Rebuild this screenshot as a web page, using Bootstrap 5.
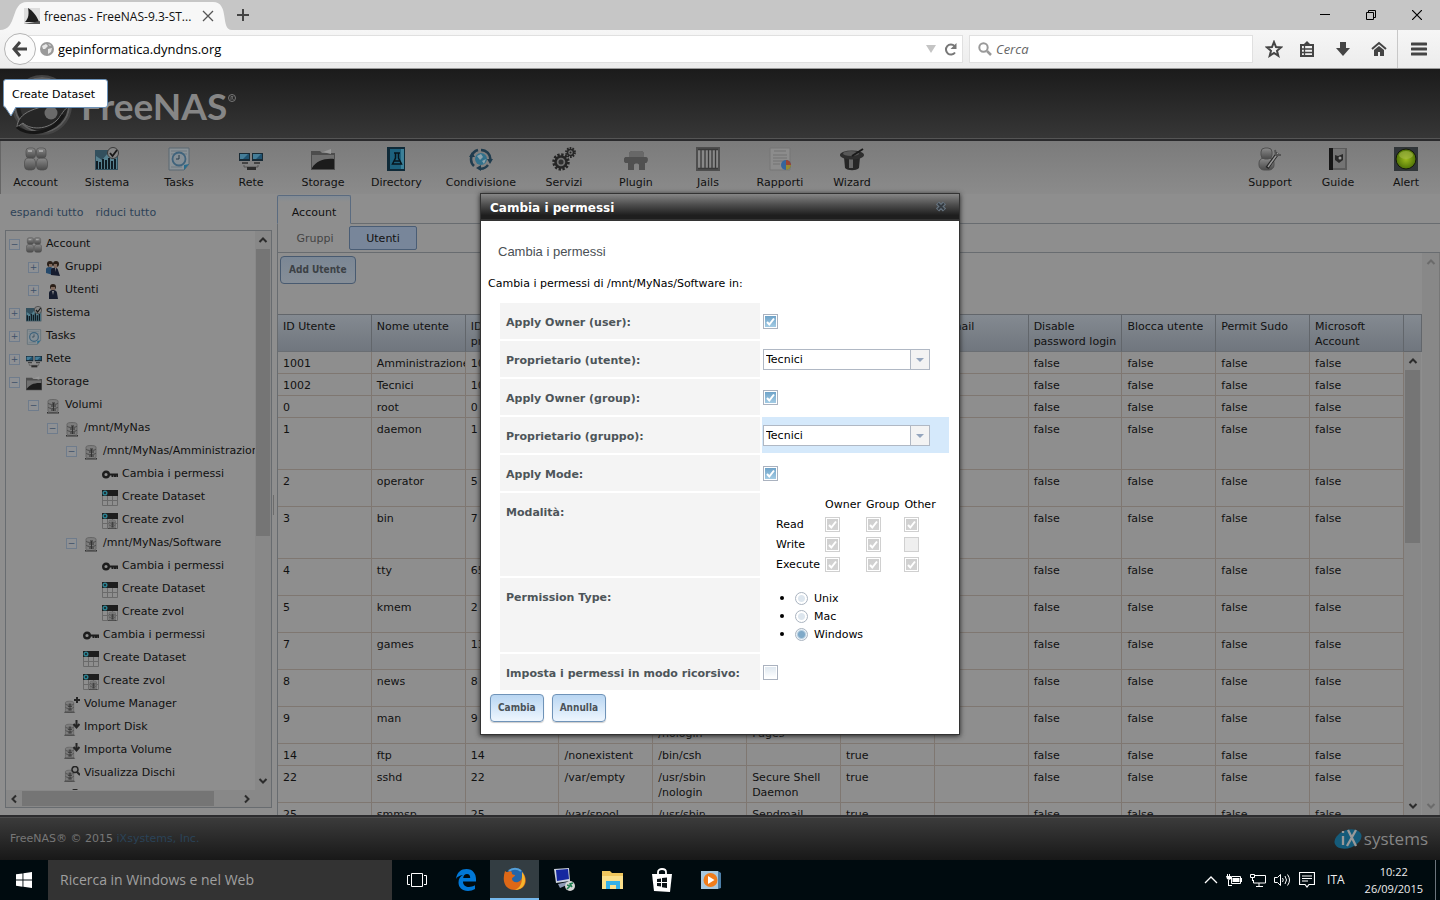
<!DOCTYPE html>
<html lang="it">
<head>
<meta charset="utf-8">
<meta name="viewport" content="width=device-width, initial-scale=1">
<title>freenas - FreeNAS-9.3-STABLE</title>
<link rel="stylesheet" href="https://cdn.jsdelivr.net/npm/bootstrap@5.3.0/dist/css/bootstrap.min.css">
<style>
:root{--dim:#8e8e8e;--line:#686c70}
body{font:11px/15px "DejaVu Sans",Verdana,sans-serif;color:#111;background:var(--dim);height:100vh;overflow:hidden}
a{text-decoration:none}
button{font:inherit;color:inherit}
svg{flex:none;display:block}
.ui{font-family:"Open Sans","Segoe UI",sans-serif}
/* browser chrome */
.tabstrip{height:30px;background:#c6c6c6}
.fftab{width:232px;height:30px;font-size:12px;padding:2px 18px 0 24px;color:#111}
.fftab .shape{position:absolute;left:0;top:2px;width:232px;height:28px}
.fftab>*{position:relative}
.winbtns button{width:46px}
.addr{height:39px;background:linear-gradient(#f6f6f6,#ececec);border-bottom:1px solid #9a9a9a;color:#4a4a4a}
.addr input{font-size:13px;color:#000;outline:0;min-width:0}
.urlbox{height:28px;border:1px solid #e0e0e0;border-left:0;margin-left:-8px}
.backbtn{width:32px;height:32px;border:1px solid #b4b4b4;border-radius:50%;background:#fafafa;z-index:1}
.searchbox{width:284px;height:28px;border:1px solid #e0e0e0;margin:0 6px}
.searchbox input{font-style:italic;font-size:13px}
.searchbox input::placeholder{color:#666;opacity:1}
.sep{width:1px;background:#c8c8c8}
.tool{width:36px;display:flex;justify-content:center;background:none;border:0;padding:0}
.tool.star{width:30px}
.tool.menu{width:42px}
/* application header */
.brandbar{height:72px;background:linear-gradient(#1b1b1b,#373737);border-bottom:2px solid #2a2a2c;box-shadow:inset 0 -1px #555;color:#868686}
.brandbar .word{font:700 37px/44px Lato,sans-serif;padding-top:4px}
.mainnav{height:53px;background:linear-gradient(#7b7b7b,#8b8b8b);box-shadow:inset 1px 0 #666}
.mainnav a{color:#111;min-width:72px;padding:6px 12px 0}
.mainnav>a:first-child{min-width:71px}
.mainnav .tools a{min-width:68px;padding:6px 4px 0}
.mainnav svg{width:24px;height:24px}
.mainnav span{margin-top:4px}
/* sidebar tree */
.side{width:273px;padding:11px 1px 7px 5px}
.side .links{padding-left:5px;margin-bottom:10px}
.side .links a{color:#2d4257}
.treebox{border:1px solid var(--line)}
.tree{list-style:none;margin:0;padding:1px 0 0}
.tree li{height:23px;padding-left:calc(3px + 19px*var(--lv,0));white-space:nowrap;display:flex;align-items:center}
.tree svg{width:16px;height:16px;margin:3px 4px 0 6px}
.tree .leaf svg{margin-left:17px}
.tree button{width:11px;height:11px;border:1px solid #6f7c8c;background:#8f9194;padding:0;color:#3c5068;font:9px/9px "DejaVu Sans",sans-serif;flex:none;margin-top:2px}
.l1{--lv:1}.l2{--lv:2}.l3{--lv:3}.l4{--lv:4}
.sbv{width:17px;background:#888;color:#2c2c2c;display:flex;flex-direction:column;align-items:center;justify-content:space-between;padding:4px 1px}
.sbv .thumb{background:#757575;width:100%}
.outer{width:18px;color:#6b6b6b;border-right:1px solid #777}
.sbh{height:17px;background:#888;color:#2c2c2c}
.sbh .thumb{background:#757575;width:192px;height:15px}
.splitter{width:4px}
.splitter i{width:1px;height:20px;background:#6c6c6c}
/* main pane */
.tabsrow{height:30px;padding-top:1px;border-bottom:1px solid var(--line)}
.apptab{width:74px;height:29px;border:1px solid #5a6b80;border-bottom-color:var(--dim);background:linear-gradient(#828b95,var(--dim) 6px);border-radius:2px 2px 0 0;margin-bottom:-1px;padding:6px 0 0}
.pane{border-left:1px solid var(--line)}
.subtabs{height:29px;border-bottom:1px solid var(--line);padding:2px 0 0 3px}
.subtabs button{height:24px;border:1px solid transparent;background:none;width:68px;color:#444}
.subtabs .on{background:#78869a;border-color:#4a5d75;border-radius:2px;color:#111}
.bigbtn{font:700 10px/14px "DejaVu Sans Condensed","DejaVu Sans",sans-serif;height:28px;border-radius:4px;padding:0 8px}
.add{background:linear-gradient(#7b8795,#868e97);border:1px solid #485a70;color:#3c4145}
.addrow{padding:3px 2px 30px}
.users{table-layout:fixed;width:100%;border-collapse:separate;border-spacing:0}
.users th,.users td{vertical-align:top;padding:4px 0 2px 5px;overflow:hidden}
.users th{font-weight:400;height:38px;background:linear-gradient(#848a91,#70767e);border-right:1px solid #62666b;border-bottom:1px solid #6a6e73;border-top:1px solid #62666b}
.users td{border-right:1px solid #7f7771;border-bottom:1px solid #7f7771}
.users .r2{height:37px}
.users .r3{height:52px}
.hfill{width:18px;height:38px;background:linear-gradient(#848a91,#70767e);border:solid #62666b;border-width:1px 1px 1px 0}
/* footer */
.foot{height:45px;background:linear-gradient(#3c3c3c,#181818);border-top:2px solid #2c2c2e;box-shadow:inset 0 1px #4d4d4d;color:#777;padding:0 12px 0 10px}
.foot a{color:#2a4358}
.foot .ix{color:#858585;font:17px/24px "Open Sans",sans-serif}
/* task bar */
.taskbar{height:40px;background:#000b0f;color:#eee;font-size:12px;line-height:16px}
.taskbar .ask{width:344px;background:#333;color:#fff;border:0;outline:0;font-size:14px;padding:0 12px}
.taskbar .ask::placeholder{color:#a0a0a0;opacity:1}
.taskbar .app{width:49px;background:none;border:0;padding:0;display:flex;align-items:center;justify-content:center}
.taskbar .startbtn{width:48px}
.taskbar .cur{background:#333d42;border-bottom:2px solid #76b9ed}
.taskbar .clock{font-size:11px;line-height:17px}
/* tooltip */
.tip{position:absolute;left:3px;top:79px;width:105px;background:#fff;border:1px solid #6d93b9;border-radius:3px;padding:7px 8px 5px;color:#000;z-index:5}
.tip svg{position:absolute;left:0;top:27px}
/* dialog */
.dlg{position:absolute;top:193px;left:0;right:0;margin:0 auto;width:480px;background:#fff;border:1px solid #333;box-shadow:0 1px 5px #222;z-index:4;color:#000}
.dlg .bar{height:27px;background:linear-gradient(#868686,#4b4b4b 45%,#1e1e1e 85%);border-bottom:2px solid #333;color:#fff;font:700 12px/16px "DejaVu Sans",sans-serif;padding:3px 12px 0 9px}
.dlg .intro{padding:23px 7px 0}
.dlg h2{font:13px/16px "Liberation Sans",Arial,sans-serif;color:#4a5055;margin:0 0 16px;padding-left:10px}
.fgrid{display:grid;grid-template-columns:260px 1fr;gap:2px;margin:12px 10px 0 19px}
.flabel{background:#f4f4f4;font-weight:700;color:#4d5559;padding:12px 0 9px 6px}
.field{padding:0 1px;min-height:36px}
.hot{background:#d5e9fb}
.cb{appearance:none;width:15px;height:15px;margin:0;border:1px solid #aab2bf;background:linear-gradient(#dfe8f0,#fff) content-box;padding:1px;display:block;flex:none}
.cb:checked{background:url("data:image/svg+xml,%3Csvg xmlns='http://www.w3.org/2000/svg' viewBox='0 0 11 11'%3E%3Cpath d='M2 6l2.3 2.5L9 2.5' fill='none' stroke='white' stroke-width='2'/%3E%3C/svg%3E") content-box center/11px no-repeat,linear-gradient(#6fa3c8,#a3cbe4) content-box}
.cb:disabled{border-color:#d0d0d0;background:#efefef}
.cb:disabled:checked{background:url("data:image/svg+xml,%3Csvg xmlns='http://www.w3.org/2000/svg' viewBox='0 0 11 11'%3E%3Cpath d='M2 6l2.3 2.5L9 2.5' fill='none' stroke='white' stroke-width='2'/%3E%3C/svg%3E") content-box center/11px no-repeat,linear-gradient(#cfcfcf,#d3d3d3) content-box}
.combo{appearance:none;width:167px;height:21px;border:1px solid #b0b8c4;border-radius:0;padding:1px 2px 0;font:inherit;color:#000;background:url("data:image/svg+xml,%3Csvg xmlns='http://www.w3.org/2000/svg' viewBox='0 0 19 19'%3E%3Cpath d='M0 0h19v19H0z' fill='%23f3f3f3'/%3E%3Cpath d='M.5 0v19' stroke='%23b0b8c4'/%3E%3Cpath d='M6 8h8l-4 4z' fill='%2394a5bd'/%3E%3C/svg%3E") right/19px no-repeat #fff}
.modes{border-collapse:separate;border-spacing:5px 2px;margin:0 0 1px 8px}
.modes th{font-weight:400;height:18px;padding:1px 0 0;text-align:left;vertical-align:middle}
.modes td{height:18px;padding:0}
.ptype{margin:11px 0 0;padding:0 0 9px 32px;line-height:17px}
.ptype li::marker{font-size:14px}
.ptype label{margin-left:6px}
.rb{appearance:none;width:13px;height:13px;border-radius:50%;border:1px solid #aab4c0;background:radial-gradient(#dde6ee 0 3px,#fff 4px);margin:0;vertical-align:-3px}
.rb:checked{background:radial-gradient(#7fa9c8 0 3px,#eaf2f8 5px)}
.actions{padding:4px 9px 12px}
.act{background:linear-gradient(#b9d6f2,#eef6fe);border:1px solid #6f93b8;color:#4a5258;box-shadow:0 1px 1px #ccc;padding:0 7px}
</style>
</head>
<body class="d-flex flex-column">
<svg width="0" height="0" class="position-absolute" aria-hidden="true">
<defs>
<linearGradient id="gg" x2="0" y2="1"><stop stop-color="#8b8b8b"/><stop offset="1" stop-color="#4a4a4a"/></linearGradient>
<radialGradient id="gl"><stop stop-color="#9dbb1e"/><stop offset="1" stop-color="#4f7306"/></radialGradient>
</defs>
<symbol id="account" viewBox="0 0 24 24"><g fill="url(#gg)" stroke="#4d4d4d" stroke-width=".7"><rect x="0.5" y="11" width="11" height="12" rx="4"/><rect x="12.500" y="11" width="11" height="12" rx="4"/><rect x="2" y="1" width="9.500" height="10" rx="3"/><rect x="12.500" y="1" width="9.500" height="10" rx="3"/></g><path d="M4 4h4M15 4h4" stroke="#a5a5a5" stroke-width="2"/></symbol>
<symbol id="system" viewBox="0 0 24 24"><path d="M0 3h23v20H0z" fill="#33505e"/><path d="M1 9l6 4 6-7 4 6 5-3v13H1z" fill="#55808f"/><path d="M2 22V14M5 22v-7M8 22V12M11 22v-9M14 22V11M17 22v-8M20 22V12" stroke="#101c24" stroke-width="2"/><circle cx="18" cy="6" r="5.500" fill="#858585" stroke="#3b3b3b"/><path d="M15 6l2.500 3L22 3" fill="none" stroke="#181818" stroke-width="1.800"/></symbol>
<symbol id="tasks" viewBox="0 0 24 24"><path d="M2 1h20v16l-5 6H2z" fill="#8a9297" stroke="#5b6972"/><path d="M4 4h16M4 7h16M4 20h11" stroke="#6c7880"/><circle cx="12" cy="12" r="6.500" fill="#858f96" stroke="#3f637c" stroke-width="1.800"/><path d="M12 8v4H9" fill="none" stroke="#263a48"/><path d="M22 17l-5 6v-5z" fill="#276c8d"/></symbol>
<symbol id="net" viewBox="0 0 24 24"><path d="M0 6h11v8H0zM13 6h11v8H13z" fill="#182a35"/><path d="M1 7h9v5H1zM14 7h9v5h-9z" fill="#1f5270"/><path d="M1 7h8l-5 5H1zM14 7h8l-5 5h-3z" fill="#457d98"/><path d="M3 16h6M15 16h6" stroke="#444" stroke-width="2"/><path d="M5 18v2h14v-2" stroke="#555" fill="none"/><path d="M8 20h9v3H8z" fill="#2c2c2c"/></symbol>
<symbol id="storage" viewBox="0 0 24 24"><path d="M0 4h9l2 2h13v17H0z" fill="#4d4d4d"/><path d="M12 5l8-3v5" fill="#999"/><path d="M1 8h22v14H1z" fill="#1c1c1c"/><path d="M1 8h22v4C14 11 5 14 1 21z" fill="#6f6f6f"/></symbol>
<symbol id="dir" viewBox="0 0 24 24"><path d="M3 0h18v24H3z" fill="#0f2a38"/><path d="M6 2h14v20H6z" fill="#1d617d"/><path d="M17 2h3v20h-3z" fill="#3c8098"/><path d="M10 6h6M11.500 6v5L8.500 17h9l-3-6V6M10 14h6" fill="none" stroke="#07151d" stroke-width="1.500"/></symbol>
<symbol id="share" viewBox="0 0 24 24"><path d="M12 3A9.500 9.500 0 0 1 21.500 13M19 18A9.500 9.500 0 0 1 10 21.500M5 19A9.500 9.500 0 0 1 9 3" fill="none" stroke="#203c4e" stroke-width="2.500"/><path d="M18 12h6l-3 5zM12 18v6l-5-3zM0 10h6L3 5z" fill="#203c4e"/><circle cx="12" cy="12" r="6" fill="#31718c"/><path d="M8 9l4-2 2 3-3 3zM13 14l4-2-2 5z" fill="#8ba2ac"/></symbol>
<symbol id="gear" viewBox="0 0 24 24"><circle cx="9" cy="15" r="7" fill="none" stroke="#252525" stroke-width="3.500" stroke-dasharray="2.200 1.464"/><circle cx="9" cy="15" r="5.500" fill="#707070" stroke="#252525" stroke-width="2.500"/><circle cx="9" cy="15" r="2.500" fill="#303030"/><circle cx="18.500" cy="5.500" r="4.200" fill="none" stroke="#252525" stroke-width="2.400" stroke-dasharray="1.600 1.040"/><circle cx="18.500" cy="5.500" r="3" fill="#777" stroke="#252525" stroke-width="1.500"/><circle cx="18.500" cy="5.500" r="1" fill="#222"/></symbol>
<symbol id="plugin" viewBox="0 0 24 24"><path d="M5 10V7c0-2 2-3 3-3h9c2 0 3 2 3 3v3h2c3 0 2 6 0 6h-1v7h-6v-5c0-2-5-2-5 0v5H4v-7H2c-3 0-3-6 0-6z" fill="#505050"/><path d="M5 10V7c0-2 2-3 3-3h9c2 0 3 2 3 3v3z" fill="#686868"/></symbol>
<symbol id="jail" viewBox="0 0 24 24"><path d="M0 0h24v24H0z" fill="#4e4e4e"/><path d="M2 2h20v20H2z" fill="#888"/><path d="M5 3v18M9 3v18M12.500 3v18M16 3v18M19.500 3v18M2 2.500h20M2 21.500h20" stroke="#3a3a3a" stroke-width="1.300"/></symbol>
<symbol id="report" viewBox="0 0 24 24"><path d="M2 1h20v22H2z" fill="#8c8c8c" stroke="#777"/><path d="M6 4h12M5 8h14M5 11h14M5 14h14M5 17h7" stroke="#737373"/><circle cx="18" cy="18" r="5" fill="#35659b"/><path d="M18 18V13a5 5 0 0 1 5 5z" fill="#9b4432"/><path d="M18 18h5a5 5 0 0 1-5 5z" fill="#98892f"/></symbol>
<symbol id="wizard" viewBox="0 0 24 24"><path d="M4 10h16l-1 11c-3 3-11 3-14 0z" fill="#262626"/><path d="M9 12h4v9H9z" fill="#666"/><ellipse cx="12" cy="8" rx="12" ry="4.500" fill="#2e2e2e"/><ellipse cx="11" cy="6.500" rx="8" ry="2.500" fill="#585858"/><path d="M12 9L23 2" stroke="#1a1a1a" stroke-width="2"/></symbol>
<symbol id="support" viewBox="0 0 24 24"><g fill="url(#gg)" stroke="#505050"><rect x="1" y="11" width="15" height="12" rx="5"/><rect x="3" y="1" width="11" height="11" rx="4"/></g><path d="M9 21L20 6" stroke="#252525" stroke-width="3.500"/><path d="M10 20L20 6" stroke="#999" stroke-width="1.500"/><path d="M17 3l1 5 5 0" fill="none" stroke="#555" stroke-width="2"/></symbol>
<symbol id="guide" viewBox="0 0 24 24"><path d="M3 1h18v22H3z" fill="#5c5c5c"/><path d="M3 1h4v22H3z" fill="#161616"/><path d="M7 2h12v19H7z" fill="#747474"/><path d="M9 8l3 1 5-2v6l-4 3-4-3z" fill="#2a2a2a"/><circle cx="14" cy="11" r="1.500" fill="#999"/></symbol>
<symbol id="alert" viewBox="0 0 24 24"><path d="M0 0h24v24H0z" fill="#303538"/><circle cx="12" cy="12" r="10" fill="url(#gl)" stroke="#15180c"/><ellipse cx="12" cy="8" rx="7" ry="4" fill="#a4b947" opacity=".6"/></symbol>
<symbol id="user" viewBox="0 0 16 16"><circle cx="8" cy="4" r="3" fill="#2a1f18"/><path d="M6 4h4v4H6z" fill="#80695c"/><path d="M4 16V10c0-2 2-3 4-3s4 1 4 3l1 6z" fill="#161c2e"/><path d="M7 8h2l-1 4z" fill="#8b8b8b"/></symbol>
<symbol id="group" viewBox="0 0 16 16"><circle cx="5" cy="4" r="3" fill="#2a1f18"/><circle cx="11" cy="4" r="3" fill="#2a1f18"/><path d="M4 4h3v3H4zM9 4h3v4H9z" fill="#80695c"/><path d="M1 13V9c0-2 6-3 7 0v6z" fill="#25496b"/><path d="M6 15V10c0-3 7-3 7 0l2 6z" fill="#161c2e"/><path d="M10 8h1l-1 4z" fill="#8b8b8b"/></symbol>
<symbol id="vol" viewBox="0 0 16 16"><path d="M3 3c0-2 10-2 10 0v10c0 2-10 2-10 0z" fill="#7d7d7d" stroke="#666"/><path d="M3 5c1 2 9 2 10 0M3 9c1 2 9 2 10 0" fill="none" stroke="#4a4a4a"/><path d="M7 5h3M6 8h5M6 12h5M8.500 5v8M3 14l-1 1h12l-1-1" stroke="#333" fill="none"/></symbol>
<symbol id="volplus" viewBox="0 0 16 16"><use href="#vol" transform="translate(-1 3) scale(.82)"/><path d="M13 0v6M10 3h6" stroke="#252525" stroke-width="2"/></symbol>
<symbol id="voldown" viewBox="0 0 16 16"><use href="#vol" transform="translate(-1 3) scale(.82)"/><path d="M12.500 0v7M9.500 4l3 3.500 3-3.500" fill="none" stroke="#252525" stroke-width="2"/></symbol>
<symbol id="volfind" viewBox="0 0 16 16"><use href="#vol" transform="translate(-1 3) scale(.82)"/><circle cx="11" cy="3.500" r="3" fill="#888" stroke="#252525" stroke-width="1.500"/><path d="M13 6l3 3" stroke="#252525" stroke-width="2"/></symbol>
<symbol id="key" viewBox="0 0 16 16"><circle cx="4" cy="7.500" r="2.800" fill="none" stroke="#1d1d1d" stroke-width="2.400"/><path d="M7 7.500h9M10.500 8v2M13 8v2M15.300 8v2" stroke="#1d1d1d" stroke-width="2"/></symbol>
<symbol id="dset" viewBox="0 0 16 16"><path d="M.5 6v9.500h15V6M5.500 6v10M10.500 6v10M0 10.500h16" fill="none" stroke="#6a6a6a"/><path d="M0 0h16v6H0z" fill="#1d1d1d"/><circle cx="3" cy="3" r="1.800" fill="none" stroke="#2c8090" stroke-width="1.500"/></symbol>
<symbol id="zvol" viewBox="0 0 16 16"><use href="#dset"/><use href="#vol" transform="translate(5 6) scale(.65)"/></symbol>
<symbol id="up" viewBox="0 0 10 10"><path d="M1.500 7L5 3.500 8.500 7" fill="none" stroke="currentColor" stroke-width="2"/></symbol>
<symbol id="dn" viewBox="0 0 10 10"><path d="M1.500 3L5 6.500 8.500 3" fill="none" stroke="currentColor" stroke-width="2"/></symbol>
</svg>

<header class="ui">
<div class="tabstrip d-flex">
 <div class="fftab position-relative d-flex align-items-center">
  <svg class="shape" viewBox="0 0 232 28"><path d="M0 28C18 28 10 0 27 0H213C230 0 220 28 232 28z" fill="#f7f7f7"/></svg>
  <svg width="16" height="16" viewBox="0 0 16 16"><path d="M0 0h16v16H0z" fill="#ddd"/><path d="M4 0c5 3 9 8 11 14H1C5 10 5 5 4 0z" fill="#1d1d1d"/><path d="M0 16l16-3v3z" fill="#555"/></svg>
  <span class="ms-1 flex-grow-1 text-nowrap">freenas - FreeNAS-9.3-ST...</span>
  <svg width="12" height="12" viewBox="0 0 12 12"><path d="M1 1l10 10M11 1L1 11" stroke="#555" stroke-width="1.300"/></svg>
 </div>
 <button class="btn p-0 border-0 ms-1" aria-label="Nuova scheda"><svg width="14" height="14" viewBox="0 0 14 14"><path d="M7 1v12M1 7h12" stroke="#444" stroke-width="2"/></svg></button>
 <div class="winbtns ms-auto d-flex">
  <button class="btn p-0 border-0 rounded-0" aria-label="Riduci"><svg class="m-auto" width="10" height="10"><path d="M0 4.500h10" stroke="#000"/></svg></button>
  <button class="btn p-0 border-0 rounded-0" aria-label="Ripristina"><svg class="m-auto" width="10" height="10"><path d="M.5 2.500h7v7h-7zM2.500 2V.5h7v7H8" fill="none" stroke="#000"/></svg></button>
  <button class="btn p-0 border-0 rounded-0" aria-label="Chiudi"><svg class="m-auto" width="10" height="10"><path d="M0 0l10 10M10 0L0 10" stroke="#000" stroke-width="1.200"/></svg></button>
 </div>
</div>
<div class="addr d-flex align-items-center ps-1">
 <button class="backbtn p-0 d-flex align-items-center justify-content-center" aria-label="Indietro"><svg width="16" height="16" viewBox="0 0 16 16"><path d="M8 1L2 8l6 7M2 8h13" fill="none" stroke="#444" stroke-width="3"/></svg></button>
 <div class="urlbox bg-white flex-grow-1 d-flex align-items-center ps-2 pe-1">
  <svg class="ms-1 me-1" width="14" height="14" viewBox="0 0 14 14"><circle cx="7" cy="7" r="7" fill="#9a9a9a"/><path d="M2 4l4-2 2 2-3 3-2 0zM8 7l4-1-1 4-3 2zM8 2l3 1-1 1z" fill="#e8e8e8"/></svg>
  <input class="border-0 p-0 flex-grow-1" aria-label="Indirizzo" value="gepinformatica.dyndns.org">
  <svg class="me-2" width="10" height="8"><path d="M0 0h10L5 8z" fill="#c4c4c4"/></svg>
  <svg width="14" height="14" viewBox="0 0 14 14"><path d="M11 10.500A5 5 0 1 1 10.500 4" fill="none" stroke="#777" stroke-width="2"/><path d="M12.500 1v6h-6z" fill="#777"/></svg>
 </div>
 <div class="searchbox bg-white d-flex align-items-center ps-2 pe-1">
  <svg width="14" height="14" viewBox="0 0 14 14"><circle cx="5.500" cy="5.500" r="4.200" fill="none" stroke="#999" stroke-width="2"/><path d="M9 9l4 4" stroke="#999" stroke-width="2.500"/></svg>
  <input class="border-0 p-0 ps-1 w-100" placeholder="Cerca" aria-label="Cerca">
 </div>
 <button class="tool star" aria-label="Segnalibri"><svg width="18" height="18" viewBox="0 0 18 18"><path d="M9 2l2 5 5 .4-4 3.400 1.300 5L9 13l-4.300 2.800L6 10.800 2 7.400 7 7z" fill="none" stroke="#444" stroke-width="2"/></svg></button>
 <button class="tool" aria-label="Elenco"><svg width="14" height="16" viewBox="0 0 14 16"><path d="M1 4h12v11H1z" fill="none" stroke="#444" stroke-width="2"/><path d="M4 3l3-3 3 3z" fill="#444"/><path d="M2 8h10M2 11.500h10M4.500 5v9" stroke="#444" stroke-width="1.300"/></svg></button>
 <button class="tool" aria-label="Download"><svg width="14" height="16" viewBox="0 0 14 16"><path d="M4 1h6v6h4l-7 8-7-8h4z" fill="#444"/></svg></button>
 <button class="tool" aria-label="Pagina iniziale"><svg width="16" height="16" viewBox="0 0 16 16"><path d="M1 8l7-6 7 6" fill="none" stroke="#444" stroke-width="2"/><path d="M3 9l5-4 5 4v6h-4v-4H7v4H3z" fill="#444"/></svg></button>
 <div class="sep align-self-stretch"></div>
 <button class="tool menu" aria-label="Menu"><svg width="16" height="14"><path d="M1 2h14M1 7h14M1 12h14" stroke="#444" stroke-width="3" stroke-linecap="round"/></svg></button>
</div>
</header>

<div class="brandbar d-flex align-items-center flex-shrink-0">
 <svg width="81" height="70" viewBox="0 0 81 70"><circle cx="42" cy="36" r="29" fill="none" stroke="#444" stroke-width="2"/><circle cx="42" cy="36" r="27" fill="#202020" stroke="#5e5e5e" stroke-width="2"/><circle cx="42" cy="36" r="22" fill="#333"/><path d="M17 58C18 44 34 36 74 34c-6 4-8 4-13 12-9 15-30 16-38 8z" fill="#262626" stroke="#777"/><path d="M17 58c8 8 34 10 46-12" stroke="#161616" fill="none" stroke-width="3"/><circle cx="51" cy="44" r="6.500" fill="#6a6a6a"/></svg>
 <span class="word">FreeNAS</span><svg class="align-self-start mt-4" width="10" height="10"><circle cx="5" cy="5" r="3.500" fill="none" stroke="#777"/><path d="M4 7V3.500h2L5 5l1.500 2" fill="none" stroke="#777" stroke-width=".8"/></svg>
</div>

<nav class="mainnav d-flex text-center flex-shrink-0">
 <a href="#" class="d-flex flex-column align-items-center"><svg><use href="#account"/></svg><span>Account</span></a>
 <a href="#" class="d-flex flex-column align-items-center"><svg><use href="#system"/></svg><span>Sistema</span></a>
 <a href="#" class="d-flex flex-column align-items-center"><svg><use href="#tasks"/></svg><span>Tasks</span></a>
 <a href="#" class="d-flex flex-column align-items-center"><svg><use href="#net"/></svg><span>Rete</span></a>
 <a href="#" class="d-flex flex-column align-items-center"><svg><use href="#storage"/></svg><span>Storage</span></a>
 <a href="#" class="d-flex flex-column align-items-center"><svg><use href="#dir"/></svg><span>Directory</span></a>
 <a href="#" class="d-flex flex-column align-items-center"><svg><use href="#share"/></svg><span>Condivisione</span></a>
 <a href="#" class="d-flex flex-column align-items-center"><svg><use href="#gear"/></svg><span>Servizi</span></a>
 <a href="#" class="d-flex flex-column align-items-center"><svg><use href="#plugin"/></svg><span>Plugin</span></a>
 <a href="#" class="d-flex flex-column align-items-center"><svg><use href="#jail"/></svg><span>Jails</span></a>
 <a href="#" class="d-flex flex-column align-items-center"><svg><use href="#report"/></svg><span>Rapporti</span></a>
 <a href="#" class="d-flex flex-column align-items-center"><svg><use href="#wizard"/></svg><span>Wizard</span></a>
 <div class="tools d-flex ms-auto">
 <a href="#" class="d-flex flex-column align-items-center"><svg><use href="#support"/></svg><span>Support</span></a>
 <a href="#" class="d-flex flex-column align-items-center"><svg><use href="#guide"/></svg><span>Guide</span></a>
 <a href="#" class="d-flex flex-column align-items-center"><svg><use href="#alert"/></svg><span>Alert</span></a>
 </div>
</nav>

<main class="d-flex flex-grow-1 overflow-hidden">
<aside class="side d-flex flex-column flex-shrink-0">
 <div class="links d-flex gap-2"><a href="#" class="me-1">espandi tutto</a><a href="#">riduci tutto</a></div>
 <div class="treebox flex-grow-1 overflow-hidden d-flex flex-column">
  <div class="d-flex flex-grow-1 overflow-hidden">
  <ul class="tree flex-grow-1 overflow-hidden">
   <li><button>−</button><svg><use href="#account"/></svg>Account</li>
   <li class="l1"><button>+</button><svg><use href="#group"/></svg>Gruppi</li>
   <li class="l1"><button>+</button><svg><use href="#user"/></svg>Utenti</li>
   <li><button>+</button><svg><use href="#system"/></svg>Sistema</li>
   <li><button>+</button><svg><use href="#tasks"/></svg>Tasks</li>
   <li><button>+</button><svg><use href="#net"/></svg>Rete</li>
   <li><button>−</button><svg><use href="#storage"/></svg>Storage</li>
   <li class="l1"><button>−</button><svg><use href="#vol"/></svg>Volumi</li>
   <li class="l2"><button>−</button><svg><use href="#vol"/></svg>/mnt/MyNas</li>
   <li class="l3"><button>−</button><svg><use href="#vol"/></svg>/mnt/MyNas/Amministrazione</li>
   <li class="l4 leaf"><svg><use href="#key"/></svg>Cambia i permessi</li>
   <li class="l4 leaf"><svg><use href="#dset"/></svg>Create Dataset</li>
   <li class="l4 leaf"><svg><use href="#zvol"/></svg>Create zvol</li>
   <li class="l3"><button>−</button><svg><use href="#vol"/></svg>/mnt/MyNas/Software</li>
   <li class="l4 leaf"><svg><use href="#key"/></svg>Cambia i permessi</li>
   <li class="l4 leaf"><svg><use href="#dset"/></svg>Create Dataset</li>
   <li class="l4 leaf"><svg><use href="#zvol"/></svg>Create zvol</li>
   <li class="l3 leaf"><svg><use href="#key"/></svg>Cambia i permessi</li>
   <li class="l3 leaf"><svg><use href="#dset"/></svg>Create Dataset</li>
   <li class="l3 leaf"><svg><use href="#zvol"/></svg>Create zvol</li>
   <li class="l2 leaf"><svg><use href="#volplus"/></svg>Volume Manager</li>
   <li class="l2 leaf"><svg><use href="#voldown"/></svg>Import Disk</li>
   <li class="l2 leaf"><svg><use href="#voldown"/></svg>Importa Volume</li>
   <li class="l2 leaf"><svg><use href="#volfind"/></svg>Visualizza Dischi</li>
   <li class="l2 leaf"><svg><use href="#volfind"/></svg>Visualizza Multipaths</li>
  </ul>
  <div class="sbv"><svg width="10" height="10"><use href="#up"/></svg><div class="thumb mb-auto mt-1" style="height:52%"></div><svg width="10" height="10"><use href="#dn"/></svg></div>
  </div>
  <div class="sbh d-flex align-items-center ps-1 pe-3 flex-shrink-0"><svg width="8" height="10" viewBox="0 0 8 10"><path d="M6 1.500L2.500 5 6 8.500" fill="none" stroke="currentColor" stroke-width="2"/></svg><div class="thumb ms-1 me-auto"></div><svg class="me-1" width="8" height="10" viewBox="0 0 8 10"><path d="M2 1.500L5.500 5 2 8.500" fill="none" stroke="currentColor" stroke-width="2"/></svg></div>
 </div>
</aside>
<div class="splitter d-flex align-items-center flex-shrink-0"><i></i></div>
<section class="flex-grow-1 d-flex flex-column overflow-hidden">
 <div class="tabsrow d-flex flex-shrink-0"><button class="apptab">Account</button></div>
 <div class="pane flex-grow-1 d-flex flex-column overflow-hidden">
  <div class="subtabs d-flex flex-shrink-0"><button>Gruppi</button><button class="on">Utenti</button></div>
  <div class="d-flex flex-grow-1 overflow-hidden">
   <div class="flex-grow-1 d-flex flex-column overflow-hidden">
    <div class="addrow"><button class="bigbtn add">Add Utente</button></div>
    <div class="d-flex flex-grow-1 overflow-hidden">
     <div class="flex-grow-1 overflow-hidden">
     <table class="users">
     <thead><tr><th>ID Utente</th><th>Nome utente</th><th>ID gruppo primario</th><th></th><th></th><th></th><th></th><th>E-mail</th><th>Disable password login</th><th>Blocca utente</th><th>Permit Sudo</th><th>Microsoft Account</th></tr></thead>
     <tbody>
     <tr><td>1001</td><td>Amministrazione</td><td>1001</td><td></td><td></td><td></td><td></td><td></td><td>false</td><td>false</td><td>false</td><td>false</td></tr>
     <tr><td>1002</td><td>Tecnici</td><td>1002</td><td></td><td></td><td></td><td></td><td></td><td>false</td><td>false</td><td>false</td><td>false</td></tr>
     <tr><td>0</td><td>root</td><td>0</td><td></td><td></td><td></td><td></td><td></td><td>false</td><td>false</td><td>false</td><td>false</td></tr>
     <tr class="r3"><td>1</td><td>daemon</td><td>1</td><td></td><td></td><td></td><td></td><td></td><td>false</td><td>false</td><td>false</td><td>false</td></tr>
     <tr class="r2"><td>2</td><td>operator</td><td>5</td><td></td><td></td><td></td><td></td><td></td><td>false</td><td>false</td><td>false</td><td>false</td></tr>
     <tr class="r3"><td>3</td><td>bin</td><td>7</td><td></td><td></td><td></td><td></td><td></td><td>false</td><td>false</td><td>false</td><td>false</td></tr>
     <tr class="r2"><td>4</td><td>tty</td><td>65533</td><td></td><td></td><td></td><td></td><td></td><td>false</td><td>false</td><td>false</td><td>false</td></tr>
     <tr class="r2"><td>5</td><td>kmem</td><td>2</td><td></td><td></td><td></td><td></td><td></td><td>false</td><td>false</td><td>false</td><td>false</td></tr>
     <tr class="r2"><td>7</td><td>games</td><td>13</td><td></td><td></td><td></td><td></td><td></td><td>false</td><td>false</td><td>false</td><td>false</td></tr>
     <tr class="r2"><td>8</td><td>news</td><td>8</td><td></td><td></td><td></td><td></td><td></td><td>false</td><td>false</td><td>false</td><td>false</td></tr>
     <tr class="r2"><td>9</td><td>man</td><td>9</td><td></td><td><br>/nologin</td><td><br>Pages</td><td></td><td></td><td>false</td><td>false</td><td>false</td><td>false</td></tr>
     <tr><td>14</td><td>ftp</td><td>14</td><td>/nonexistent</td><td>/bin/csh</td><td></td><td>true</td><td></td><td>false</td><td>false</td><td>false</td><td>false</td></tr>
     <tr><td>22</td><td>sshd</td><td>22</td><td>/var/empty</td><td>/usr/sbin<br>/nologin</td><td>Secure Shell<br>Daemon</td><td>true</td><td></td><td>false</td><td>false</td><td>false</td><td>false</td></tr>
     <tr class="r2"><td>25</td><td>smmsp</td><td>25</td><td>/var/spool</td><td>/usr/sbin</td><td>Sendmail</td><td>true</td><td></td><td>false</td><td>false</td><td>false</td><td>false</td></tr>
     </tbody></table>
     </div>
     <div class="d-flex flex-column flex-shrink-0">
      <div class="hfill"></div>
      <div class="sbv flex-grow-1"><svg width="10" height="10"><use href="#up"/></svg><div class="thumb mb-auto mt-1" style="height:38%"></div><svg width="10" height="10"><use href="#dn"/></svg></div>
     </div>
    </div>
   </div>
   <div class="sbv outer flex-shrink-0"><svg width="10" height="10"><use href="#up"/></svg><svg width="10" height="10"><use href="#dn"/></svg></div>
  </div>
 </div>
</section>
</main>

<footer class="foot d-flex align-items-center flex-shrink-0">
 <span>FreeNAS® © 2015 <a href="#">iXsystems, Inc.</a></span>
 <div class="ix ms-auto d-flex align-items-center"><svg width="30" height="24" viewBox="0 0 30 24"><ellipse cx="14" cy="12" rx="14" ry="9" transform="rotate(-20 14 12)" fill="#155b7a"/><path d="M9 9v9M9 4v2M14 3l8 16M22 3l-9 16" stroke="#999" stroke-width="2.300" fill="none"/></svg>systems</div>
</footer>

<div class="taskbar ui d-flex flex-shrink-0">
 <button class="app startbtn" aria-label="Start"><svg width="16" height="16" viewBox="0 0 16 16"><path d="M0 2.300L6.500 1.400V7.600H0zM7.400 1.300L16 0v7.600H7.400zM0 8.500h6.500v6.200L0 13.800zM7.400 8.500H16V16l-8.600-1.200z" fill="#fff"/></svg></button>
 <input class="ask" placeholder="Ricerca in Windows e nel Web" aria-label="Ricerca">
 <button class="app" aria-label="Visualizzazione attività"><svg width="20" height="14"><path d="M4.500.5h11v13h-11zM3 2.500H.5v9H3M17 2.500h2.500v9H17" fill="none" stroke="#fff"/></svg></button>
 <button class="app" aria-label="Edge"><svg width="20" height="22" viewBox="0 0 20 22"><path d="M0 10C1 3 5 0 10.500 0 17 0 20 5 20 10v2.500H7c0 4 3 5.500 6 5.500 2 0 4-.6 6-1.700V20c-2 1.300-4.500 2-7 2-6 0-9.500-3.600-9.500-8.500C2.500 10 4 7.600 7 6 3.500 6.500 1 8 0 10zM7.200 9h7c0-2.500-1-4-3.200-4S7.500 6.600 7.200 9z" fill="#0078d7"/></svg></button>
 <button class="app cur" aria-label="Firefox"><svg width="24" height="24" viewBox="0 0 24 24"><circle cx="12" cy="11" r="10" fill="#2465a8"/><path d="M6 4c3-3 9-3 12 0" stroke="#55a0d8" stroke-width="2" fill="none"/><path d="M2 4c1 1 2 1 3 1 1-1 3-1 4 0-1 2 1 3 3 3 0 2-3 2-3 4s3 4 6 3 4-3 4-6c1 0 0-3 0-4 7 7 4 18-7 18C1 23-1 13 2 4z" fill="#de6817"/><path d="M19 5c6 7 3 18-7 18 5-2 7-7 7-12z" fill="#f6b52c"/></svg></button>
 <button class="app" aria-label="PuTTY"><svg width="24" height="24" viewBox="0 0 24 24"><path d="M2 1l15-1 1 13-14 2z" fill="#ccd3e0"/><path d="M4 2l12-1 1 10-12 2z" fill="#1527a0"/><path d="M6 16l9-2v3l-7 3z" fill="#8d99b5"/><circle cx="18" cy="18" r="5" fill="#d6d6d6"/><path d="M15 17l3 1-3 3M21 15l-3 1 2 3" fill="none" stroke="#208050" stroke-width="1.500"/></svg></button>
 <button class="app" aria-label="Esplora file"><svg width="22" height="18" viewBox="0 0 22 18"><path d="M0 0h8l2 2h11v16H0z" fill="#f0c75e"/><path d="M0 5h21v13H0z" fill="#fbe08b"/><path d="M4 18v-8h14v8h-4v-4H8v4z" fill="#35b1e8"/></svg></button>
 <button class="app" aria-label="Store"><svg width="22" height="24" viewBox="0 0 22 24"><path d="M7 7V4c0-4 8-4 8 0v3" fill="none" stroke="#fff" stroke-width="1.800"/><path d="M1 6h20l-2 18-16-1z" fill="#fff"/><path d="M6 11l4-.6V14H6zM11 10l5-.6V14h-5zM6 15h4v3.600L6 18zM11 15h5v5l-5-.7z" fill="#0a1216"/></svg></button>
 <button class="app" aria-label="Media Player"><svg width="20" height="20" viewBox="0 0 20 20"><path d="M0 1h17v18H0z" fill="#a8c9e0"/><path d="M17 1l3 2v15l-3 1z" fill="#4d7fa8"/><circle cx="9.500" cy="10" r="7" fill="#f07d1c"/><path d="M7 6l6.500 4L7 14z" fill="#fff"/></svg></button>
 <div class="ms-auto d-flex align-items-center gap-2">
  <svg width="14" height="8" viewBox="0 0 14 8"><path d="M1 7l6-6 6 6" fill="none" stroke="#fff" stroke-width="1.300"/></svg>
  <svg width="16" height="12" viewBox="0 0 16 12"><path d="M5.500 2.500h9v7h-9z" fill="none" stroke="#fff"/><path d="M6.500 4h7v4h-7zM15 4h1v4h-1zM0 2h5v3l-2 1-2-1zM1 0h1v2H1zM3 0h1v2H3zM2 6h1v5h3v1H2z" fill="#fff"/></svg>
  <svg width="16" height="13" viewBox="0 0 16 13"><path d="M5 1.500h10.500v7.500H3.500V6M9 9v3M6 12.500h7M.5.500h4v3h-4zM2.500 4v3" fill="none" stroke="#fff"/></svg>
  <svg width="17" height="14" viewBox="0 0 17 14"><path d="M.5 4.500h3l3-3v11l-3-3h-3zM8.500 5q1.500 2 0 4M11 3q3 4 0 8M13.500 1.500q4 5.500 0 11" fill="none" stroke="#fff"/></svg>
  <svg width="16" height="16" viewBox="0 0 16 16"><path d="M.5.500h15v12H10l-2 2.500-2-2.500H.5zM3 4h10M3 6.500h10M3 9h6" fill="none" stroke="#fff" stroke-width="1.200"/></svg>
  <span class="mx-1">ITA</span>
  <span class="clock ms-2 text-center">10:22<br>26/09/2015</span>
  <div class="align-self-stretch ms-1 me-1 border-start border-secondary"></div>
 </div>
</div>

<div class="tip" role="tooltip">Create Dataset<svg width="14" height="10"><path d="M1 0l6 9 5-9z" fill="#fff"/><path d="M1 0l6 9 5-9" fill="none" stroke="#6d93b9"/></svg></div>

<form class="dlg" role="dialog" aria-label="Cambia i permessi">
 <div class="bar d-flex align-items-center justify-content-between">Cambia i permessi
  <button type="button" class="btn p-0 border-0 mb-1" aria-label="Chiudi"><svg width="12" height="11" viewBox="0 0 12 11"><path d="M2.500 2l7 7M9.500 2l-7 7" stroke="#66737f" stroke-width="4.500"/><path d="M3 2.500l6 6M9 2.500l-6 6" stroke="#343a40" stroke-width="1.800"/></svg></button></div>
 <div class="intro">
  <h2>Cambia i permessi</h2>
  <div>Cambia i permessi di /mnt/MyNas/Software in:</div>
 </div>
 <div class="fgrid">
  <label class="flabel" for="ou">Apply Owner (user):</label><div class="field d-flex align-items-center"><input class="cb" type="checkbox" id="ou" checked></div>
  <label class="flabel" for="pu">Proprietario (utente):</label><div class="field d-flex align-items-center"><select class="combo" id="pu"><option>Tecnici</option></select></div>
  <label class="flabel" for="og">Apply Owner (group):</label><div class="field d-flex align-items-center"><input class="cb" type="checkbox" id="og" checked></div>
  <label class="flabel" for="pg">Proprietario (gruppo):</label><div class="field hot d-flex align-items-center"><select class="combo" id="pg"><option>Tecnici</option></select></div>
  <label class="flabel" for="am">Apply Mode:</label><div class="field d-flex align-items-center"><input class="cb" type="checkbox" id="am" checked></div>
  <div class="flabel">Modalità:</div>
  <div class="field"><table class="modes">
   <tr><th></th><th>Owner</th><th>Group</th><th>Other</th></tr>
   <tr><th>Read</th><td><input class="cb" type="checkbox" aria-label="Owner read" checked disabled></td><td><input class="cb" type="checkbox" aria-label="Group read" checked disabled></td><td><input class="cb" type="checkbox" aria-label="Other read" checked disabled></td></tr>
   <tr><th>Write</th><td><input class="cb" type="checkbox" aria-label="Owner write" checked disabled></td><td><input class="cb" type="checkbox" aria-label="Group write" checked disabled></td><td><input class="cb" type="checkbox" aria-label="Other write" disabled></td></tr>
   <tr><th>Execute</th><td><input class="cb" type="checkbox" aria-label="Owner execute" checked disabled></td><td><input class="cb" type="checkbox" aria-label="Group execute" checked disabled></td><td><input class="cb" type="checkbox" aria-label="Other execute" checked disabled></td></tr>
  </table></div>
  <div class="flabel">Permission Type:</div>
  <div class="field"><ul class="ptype">
   <li><input class="rb" type="radio" name="pt" id="unix"><label for="unix">Unix</label></li>
   <li><input class="rb" type="radio" name="pt" id="mac"><label for="mac">Mac</label></li>
   <li><input class="rb" type="radio" name="pt" id="win" checked><label for="win">Windows</label></li>
  </ul></div>
  <label class="flabel" for="rec">Imposta i permessi in modo ricorsivo:</label><div class="field d-flex align-items-center"><input class="cb" type="checkbox" id="rec"></div>
 </div>
 <div class="actions d-flex gap-2"><button type="button" class="bigbtn act">Cambia</button><button type="button" class="bigbtn act">Annulla</button></div>
</form>
<script src="https://cdn.jsdelivr.net/npm/bootstrap@5.3.0/dist/js/bootstrap.bundle.min.js"></script>
</body>
</html>
